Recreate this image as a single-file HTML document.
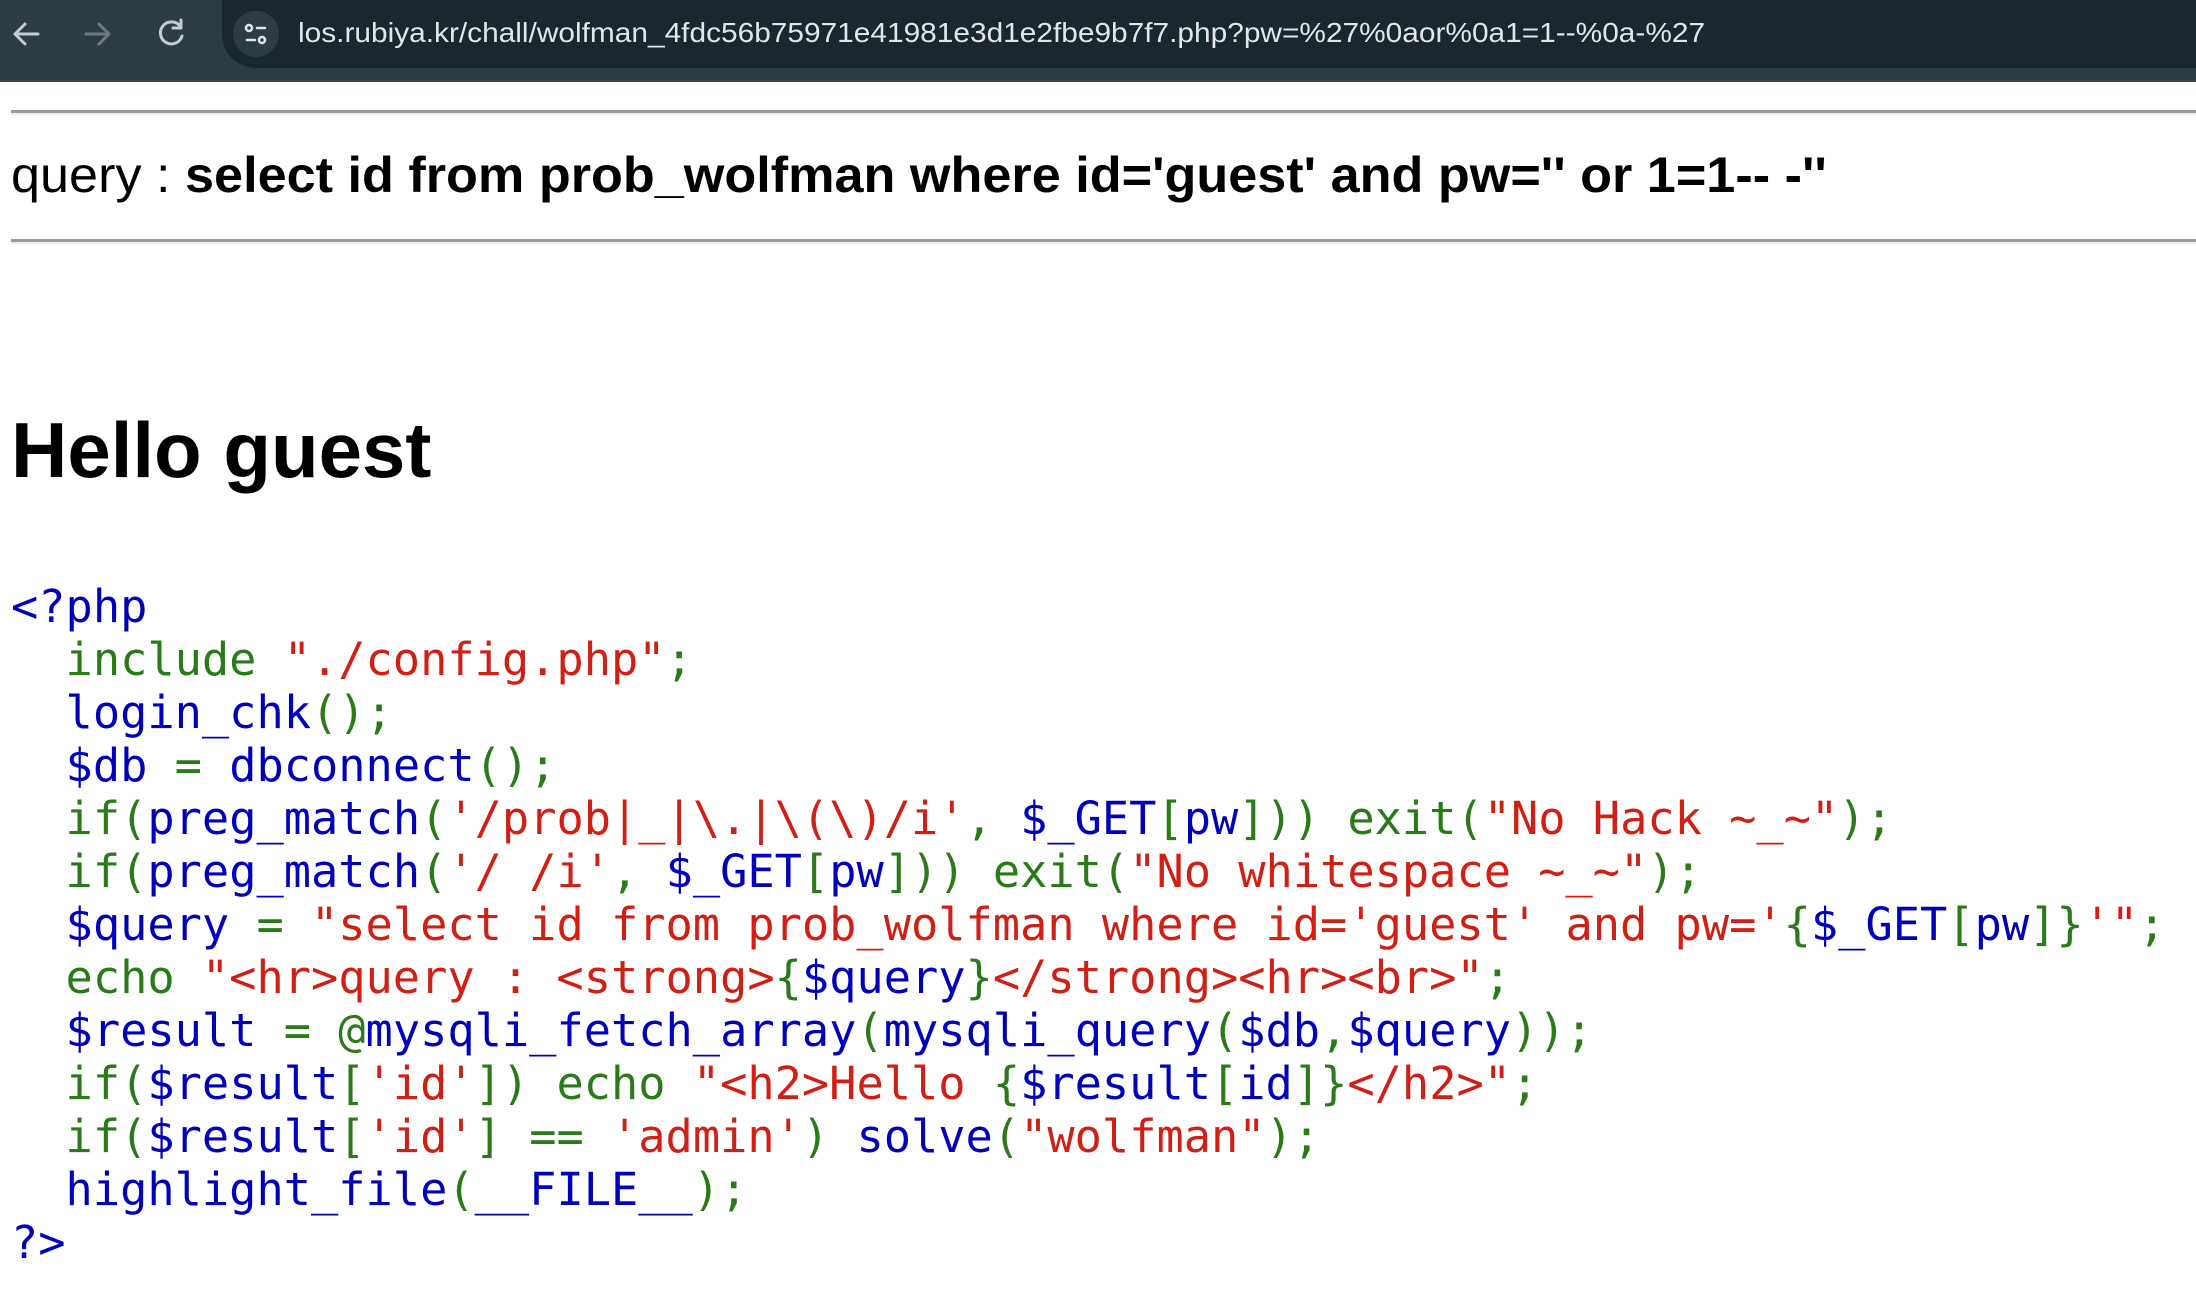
<!DOCTYPE html>
<html><head><meta charset="utf-8"><style>
html,body{margin:0;padding:0;background:#fff;width:2196px;height:1302px;overflow:hidden;position:relative}
.bar{position:absolute;left:0;top:0;width:2196px;height:80px;background:#2d3c44;border-bottom:2px solid #3a474e}
.addr{position:absolute;left:222px;top:0;width:1974px;height:68px;background:#1b272e;border-radius:0 0 0 34px}
.circ{position:absolute;left:233px;top:11px;width:46px;height:46px;border-radius:50%;background:#2d3c44}
.url{position:absolute;left:298px;top:17px;font:28px "Liberation Sans",sans-serif;color:#e3e6e8;white-space:nowrap;transform-origin:0 0}
.hr{position:absolute;left:11px;width:2185px;height:3px;background:#9a9a9a;border-bottom:2px solid #ececec}
.q{position:absolute;left:11px;top:146px;font:50px "Liberation Sans",sans-serif;white-space:nowrap;transform-origin:0 0;color:#000}
h2{position:absolute;left:11px;top:405px;margin:0;font:bold 78px "Liberation Sans",sans-serif;white-space:nowrap}
pre{position:absolute;left:11px;top:580px;margin:0;font:45.3px/53px "DejaVu Sans Mono",monospace;color:#0000BB}
.g{color:#2a7a1a}.r{color:#d01f14}.b{color:#0000BB}
</style></head><body>
<div class="bar"></div>
<svg style="position:absolute;left:0;top:0" width="222" height="68">
<g fill="none" stroke-width="3" stroke-linecap="round" stroke-linejoin="round">
<path d="M38 34H15M25 24L15 34L25 44" stroke="#c4ccd0"/>
<path d="M86 34H109M99 24L109 34L99 44" stroke="#6f7a80"/>
<path d="M180 26A11 11 0 1 0 182 36" stroke="#c4ccd0"/>
<path d="M181 20V28H173" stroke="#c4ccd0"/>
</g></svg>
<div class="addr"></div>
<div class="circ"></div>
<svg style="position:absolute;left:233px;top:11px" width="46" height="46"><g fill="none" stroke="#dfe4e6" stroke-width="2.5" stroke-linecap="round"><circle cx="16" cy="17" r="3"/><path d="M24 17H32M14 29H22"/><circle cx="29" cy="29" r="3"/></g></svg>
<div class="url" id="url">los.rubiya.kr/chall/wolfman_4fdc56b75971e41981e3d1e2fbe9b7f7.php?pw=%27%0aor%0a1=1--%0a-%27</div>
<div class="hr" style="top:110px"></div>
<div class="q" id="q">query : <b>select id from prob_wolfman where id='guest' and pw='' or 1=1-- -''</b></div>
<div class="hr" style="top:239px"></div>
<h2>Hello guest</h2>
<pre><span class="b">&lt;?php</span>
  <span class="g">include </span><span class="r">"./config.php"</span><span class="g">;</span>
  <span class="b">login_chk</span><span class="g">();</span>
  <span class="b">$db </span><span class="g">= </span><span class="b">dbconnect</span><span class="g">();</span>
  <span class="g">if(</span><span class="b">preg_match</span><span class="g">(</span><span class="r">'/prob|_|\.|\(\)/i'</span><span class="g">, </span><span class="b">$_GET</span><span class="g">[</span><span class="b">pw</span><span class="g">])) exit(</span><span class="r">"No Hack ~_~"</span><span class="g">);</span>
  <span class="g">if(</span><span class="b">preg_match</span><span class="g">(</span><span class="r">'/ /i'</span><span class="g">, </span><span class="b">$_GET</span><span class="g">[</span><span class="b">pw</span><span class="g">])) exit(</span><span class="r">"No whitespace ~_~"</span><span class="g">);</span>
  <span class="b">$query </span><span class="g">= </span><span class="r">"select id from prob_wolfman where id='guest' and pw='</span><span class="g">{</span><span class="b">$_GET</span><span class="g">[</span><span class="b">pw</span><span class="g">]}</span><span class="r">'"</span><span class="g">;</span>
  <span class="g">echo </span><span class="r">"&lt;hr&gt;query : &lt;strong&gt;</span><span class="g">{</span><span class="b">$query</span><span class="g">}</span><span class="r">&lt;/strong&gt;&lt;hr&gt;&lt;br&gt;"</span><span class="g">;</span>
  <span class="b">$result </span><span class="g">= @</span><span class="b">mysqli_fetch_array</span><span class="g">(</span><span class="b">mysqli_query</span><span class="g">(</span><span class="b">$db</span><span class="g">,</span><span class="b">$query</span><span class="g">));</span>
  <span class="g">if(</span><span class="b">$result</span><span class="g">[</span><span class="r">'id'</span><span class="g">]) echo </span><span class="r">"&lt;h2&gt;Hello </span><span class="g">{</span><span class="b">$result</span><span class="g">[</span><span class="b">id</span><span class="g">]}</span><span class="r">&lt;/h2&gt;"</span><span class="g">;</span>
  <span class="g">if(</span><span class="b">$result</span><span class="g">[</span><span class="r">'id'</span><span class="g">] == </span><span class="r">'admin'</span><span class="g">) </span><span class="b">solve</span><span class="g">(</span><span class="r">"wolfman"</span><span class="g">);</span>
  <span class="b">highlight_file</span><span class="g">(</span><span class="b">__FILE__</span><span class="g">);</span>
<span class="b">?&gt;</span></pre>
<script>
function fit(id,w){var e=document.getElementById(id);var n=e.scrollWidth;if(n>0)e.style.transform='scaleX('+(w/n)+')';}
fit('url',1407);fit('q',1816);
</script>
</body></html>
